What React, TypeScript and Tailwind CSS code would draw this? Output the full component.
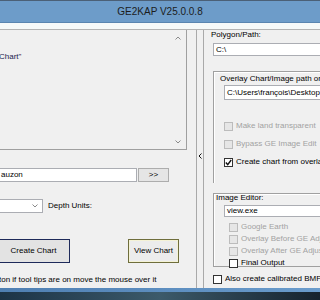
import React from 'react';

const font = { fontFamily: '"Liberation Sans", Arial, sans-serif' };

function Box({ checked, disabled }: { checked?: boolean; disabled?: boolean }) {
  return (
    <div
      className={`w-[9px] h-[9px] shrink-0 border flex items-center justify-center ${
        disabled ? 'border-[#bcbcbc] bg-[#e6e6e6]' : 'border-[#333] bg-white'
      }`}
    >
      {checked && (
        <svg width="7" height="7" viewBox="0 0 7 7">
          <path d="M0.8 3.6 L2.7 5.6 L6.2 1" fill="none" stroke="#111" strokeWidth="1.4" />
        </svg>
      )}
    </div>
  );
}

function Check({ label, checked, disabled }: { label: string; checked?: boolean; disabled?: boolean }) {
  return (
    <div className="flex items-center gap-[3px] h-[10px] whitespace-nowrap">
      <Box checked={checked} disabled={disabled} />
      <span className={disabled ? 'text-[#a2a2a2]' : 'text-black'}>{label}</span>
    </div>
  );
}

function Chevron({ dir }: { dir: 'up' | 'down' }) {
  return (
    <svg width="6" height="4" viewBox="0 0 6 4">
      <path d={dir === 'up' ? 'M0.5 3.5 L3 1 L5.5 3.5' : 'M0.5 0.5 L3 3 L5.5 0.5'} fill="none" stroke="#8a8a8a" strokeWidth="1" />
    </svg>
  );
}

export default function App() {
  return (
    <div style={font} className="w-[320px] h-[300px] overflow-hidden bg-[#f0f0f0] flex flex-col text-[8px] leading-[10px] text-black">
      {/* title bar */}
      <div className="h-px bg-[#4b6077] shrink-0" />
      <div className="h-[21px] bg-[#6d9cc9] flex items-center justify-center shrink-0 text-[10px] text-[#1c1c1c]">
        GE2KAP V25.0.0.8
      </div>
      <div className="h-px bg-[#5a85b0] shrink-0" />
      <div className="h-[6px] bg-[#f6f9f9] shrink-0" />
      <div className="h-px bg-[#b3b3b3] shrink-0" />

      <div className="flex h-[258px] shrink-0">
        {/* left column */}
        <div className="w-[196px] shrink-0 flex flex-col">
          <div className="w-[187px] h-[120px] border-r border-b border-[#9f9f9f] flex">
            <div className="flex-1 pt-[22px] -ml-[1px] text-[#1a1a4e]">Chart"</div>
            <div className="w-[16px] flex flex-col items-center justify-between pt-[6px] pb-[5px]">
              <Chevron dir="up" />
              <Chevron dir="down" />
            </div>
          </div>

          <div className="flex mt-[18px] h-[14px]">
            <div className="w-[139px] -ml-[2px] bg-white border border-[#abadb3] flex items-center pl-[2px]">auzon</div>
            <div className="w-[31px] ml-[1px] bg-[#e5e5e5] border border-[#adadad] flex items-center justify-center">&gt;&gt;</div>
          </div>

          <div className="flex items-center mt-[17px] h-[14px]">
            <div className="w-[45px] h-full -ml-[2px] bg-white border border-[#abadb3] flex items-center justify-end pr-[4px]">
              <Chevron dir="down" />
            </div>
            <span className="ml-[5px]">Depth Units:</span>
          </div>

          <div className="flex mt-[26px] h-[24px]">
            <div className="w-[73px] -ml-[3px] border border-[#1e2a5a] bg-[#e3e3e3] flex items-center justify-center">
              Create Chart
            </div>
            <div className="w-[51px] ml-[58px] border border-[#6f6e3c] bg-[#ececec] shadow-[inset_0_0_0_1px_#f4f2d6] flex items-center justify-center">
              View Chart
            </div>
          </div>

          <div className="mt-[12px] -ml-[1px] whitespace-nowrap">ton if tool tips are on move the mouse over it</div>
        </div>

        {/* splitter */}
        <div className="w-[8px] shrink-0 border-l border-r border-[#a9a9a9] flex flex-col items-center pt-[123px]">
          <svg width="4" height="6" viewBox="0 0 4 6">
            <path d="M3.5 0.5 L1 3 L3.5 5.5" fill="none" stroke="#111" strokeWidth="1" />
          </svg>
        </div>

        {/* right column */}
        <div className="flex-1 flex flex-col pl-[9px] whitespace-nowrap">
          <div className="-ml-[2px]">Polygon/Path:</div>
          <div className="mt-[3px] h-[13px] bg-white border border-r-0 border-[#abadb3] flex items-center pl-[2px]">C:\</div>

          <div className="mt-[15px] h-[112px] border-l border-t border-[#a0a0a0] shadow-[inset_1px_1px_0_#ffffff] flex flex-col pl-[7px] pt-[2px]">
            <div className="-ml-[1px]">Overlay Chart/Image path or</div>
            <div className="mt-[1px] ml-[3px] h-[15px] bg-white border border-r-0 border-[#abadb3] flex items-center pl-[2px]">
              C:\Users\françois\Desktop
            </div>
            <div className="ml-[3px] mt-[21px] flex flex-col gap-[8px]">
              <Check label="Make land transparent" disabled />
              <Check label="Bypass GE Image Edit" disabled />
              <Check label="Create chart from overlay" checked />
            </div>
          </div>

          <div className="mt-[10px] h-[74px] border-l border-t border-b border-[#a0a0a0] shadow-[inset_1px_1px_0_#ffffff] flex flex-col pl-[10px]">
            <div className="-ml-[8px] mt-[-1px]">Image Editor:</div>
            <div className="mt-[2px] h-[13px] bg-white border border-r-0 border-[#abadb3] flex items-center pl-[2px]">view.exe</div>
            <div className="ml-[5px] mt-[5px] flex flex-col gap-[2px]">
              <Check label="Google Earth" disabled />
              <Check label="Overlay Before GE Adjustment" disabled />
              <Check label="Overlay After GE Adjustment" disabled />
              <Check label="Final Output" />
            </div>
          </div>

          <div className="mt-[7px]">
            <Check label="Also create calibrated BMP" />
          </div>
        </div>
      </div>

      {/* window frame and desktop */}
      <div className="h-[4px] shrink-0 bg-gradient-to-r from-[#4f7fb2] to-[#6a9ccc]" />
      <div className="flex-1 bg-gradient-to-r from-[#1c3346] via-[#3c5a6a] to-[#16232e]" />
    </div>
  );
}
